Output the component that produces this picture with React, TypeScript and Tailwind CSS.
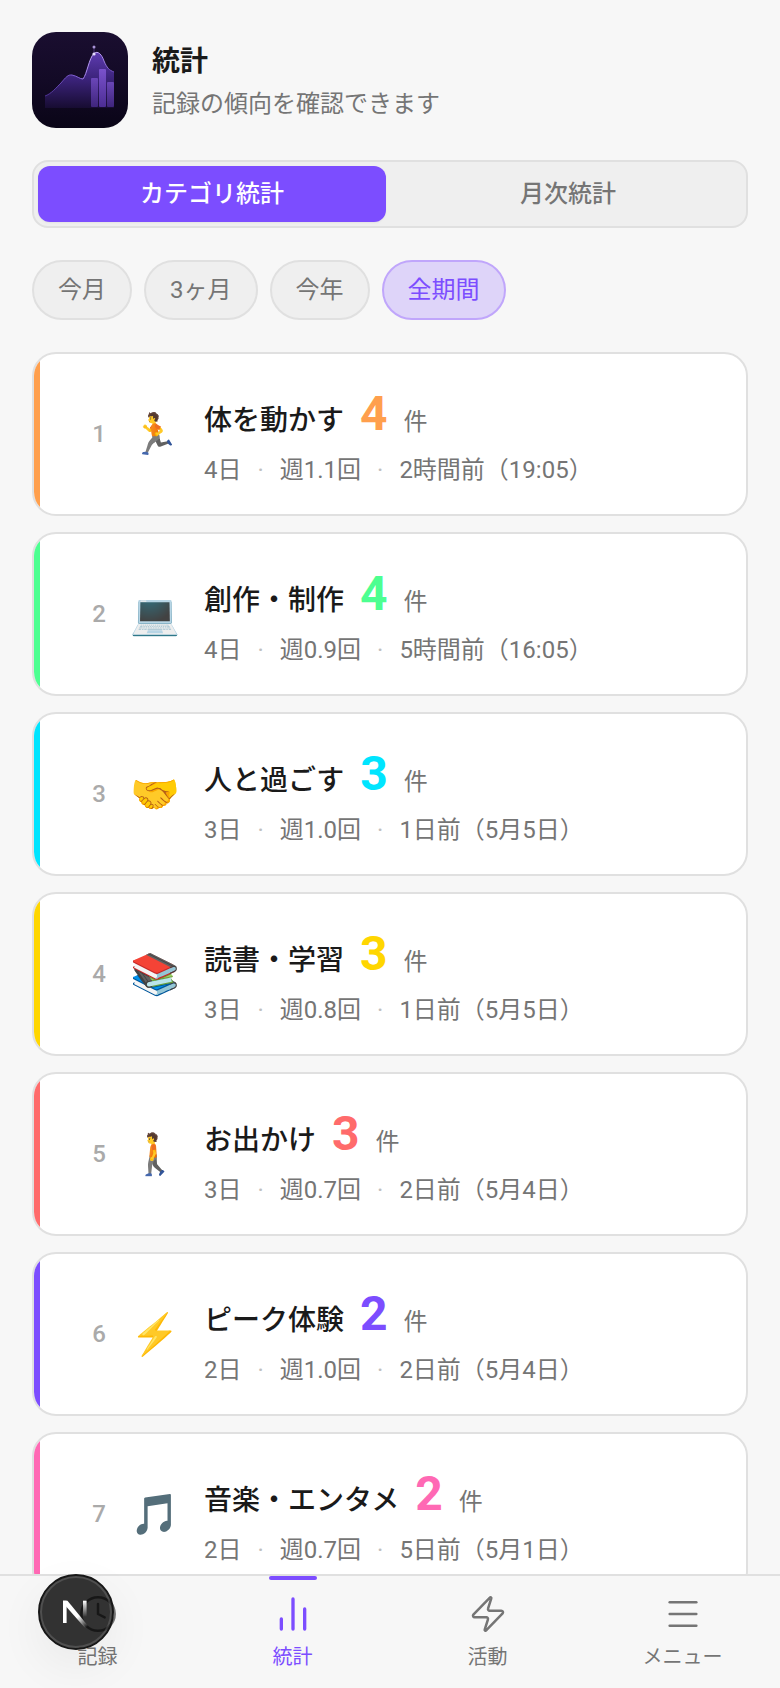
import { ChartNoAxesColumn, Clock, Menu, Zap } from "lucide-react";

type Category = {
  name: string;
  emoji: string;
  count: number;
  days: string;
  rate: string;
  last: string;
  bar: string;
  text: string;
};

const categories: Category[] = [
  { name: "体を動かす", emoji: "🏃", count: 4, days: "4日", rate: "週1.1回", last: "2時間前（19:05）", bar: "bg-[#ff9f4d]", text: "text-[#ff9f4d]" },
  { name: "創作・制作", emoji: "💻", count: 4, days: "4日", rate: "週0.9回", last: "5時間前（16:05）", bar: "bg-[#4dff91]", text: "text-[#4dff91]" },
  { name: "人と過ごす", emoji: "🤝", count: 3, days: "3日", rate: "週1.0回", last: "1日前（5月5日）", bar: "bg-[#00e5ff]", text: "text-[#00e5ff]" },
  { name: "読書・学習", emoji: "📚", count: 3, days: "3日", rate: "週0.8回", last: "1日前（5月5日）", bar: "bg-[#ffd600]", text: "text-[#ffd600]" },
  { name: "お出かけ", emoji: "🚶", count: 3, days: "3日", rate: "週0.7回", last: "2日前（5月4日）", bar: "bg-[#ff6b6b]", text: "text-[#ff6b6b]" },
  { name: "ピーク体験", emoji: "⚡", count: 2, days: "2日", rate: "週1.0回", last: "2日前（5月4日）", bar: "bg-[#7c4dff]", text: "text-[#7c4dff]" },
  { name: "音楽・エンタメ", emoji: "🎵", count: 2, days: "2日", rate: "週0.7回", last: "5日前（5月1日）", bar: "bg-[#ff69b4]", text: "text-[#ff69b4]" },
];

const periods = ["今月", "3ヶ月", "今年", "全期間"];

function StatsLogo() {
  return (
    <svg viewBox="0 0 96 96" className="size-24 shrink-0 rounded-3xl" aria-hidden="true">
      <defs>
        <linearGradient id="logoBg" x1="0" y1="0" x2="0" y2="1">
          <stop offset="0" stopColor="#1a0e30" />
          <stop offset="0.5" stopColor="#130a26" />
          <stop offset="1" stopColor="#0a0517" />
        </linearGradient>
        <linearGradient id="logoArea" x1="0" y1="0" x2="0" y2="1">
          <stop offset="0" stopColor="#5d3bb0" />
          <stop offset="0.5" stopColor="#3a2278" />
          <stop offset="1" stopColor="#170c32" />
        </linearGradient>
        <linearGradient id="logoBar" x1="0" y1="0" x2="0" y2="1">
          <stop offset="0" stopColor="#7a52cc" />
          <stop offset="1" stopColor="#4c2d94" />
        </linearGradient>
        <linearGradient id="logoLine" x1="0" y1="0" x2="1" y2="0">
          <stop offset="0" stopColor="#4a2f90" />
          <stop offset="0.5" stopColor="#8c68e0" />
          <stop offset="0.72" stopColor="#d0b8ff" />
          <stop offset="1" stopColor="#6d48c0" />
        </linearGradient>
      </defs>
      <rect width="96" height="96" fill="url(#logoBg)" />
      <path d="M13 64C19 62 24 56 29 51C34 45 36 42.500 40 43C45 44 48 47 51 47C55 42 57 26 62 21.500C66 18 70 23 72 29C75 36 77 38 82 40V76H13Z" fill="url(#logoArea)" />
      <path d="M13 64C19 62 24 56 29 51C34 45 36 42.500 40 43C45 44 48 47 51 47C55 42 57 26 62 21.500C66 18 70 23 72 29C75 36 77 38 82 40" fill="none" stroke="url(#logoLine)" strokeWidth="1" />
      <rect x="59" y="46" width="7" height="29" rx="1" fill="url(#logoBar)" opacity="0.75" />
      <rect x="67" y="37" width="7" height="38" rx="1" fill="url(#logoBar)" />
      <rect x="75" y="50" width="7" height="25" rx="1" fill="url(#logoBar)" opacity="0.75" />
      <path d="M62 15V22" stroke="#8c68e0" strokeWidth="0.6" strokeOpacity="0.7" />
      <circle cx="62" cy="15" r="1.5" fill="#a893d6" />
      <circle cx="62" cy="22" r="1.6" fill="#e6dcff" />
    </svg>
  );
}

function NextBadge() {
  return (
    <button type="button" aria-label="開発ツール" className="fixed bottom-[38px] left-[38px] size-[76px] rounded-full shadow-[0_16px_48px_rgba(0,0,0,0.06)]">
      <svg viewBox="0 0 76 76" className="size-full" aria-hidden="true">
        <defs>
          <linearGradient id="nDiag" x1="38" y1="38" x2="49" y2="53" gradientUnits="userSpaceOnUse">
            <stop offset="0.25" stopColor="#fff" />
            <stop offset="1" stopColor="#fff" stopOpacity="0" />
          </linearGradient>
          <linearGradient id="nStem" x1="0" y1="27" x2="0" y2="43" gradientUnits="userSpaceOnUse">
            <stop offset="0" stopColor="#fff" />
            <stop offset="1" stopColor="#fff" stopOpacity="0" />
          </linearGradient>
        </defs>
        <circle cx="38" cy="38" r="37" fill="#000" fillOpacity="0.8" stroke="#171717" strokeWidth="2" />
        <circle cx="38" cy="38" r="35" fill="none" stroke="#fff" strokeOpacity="0.14" strokeWidth="2" />
        <rect x="25" y="26.700" width="3.600" height="22.300" fill="#fff" />
        <path d="M25 26.700H29.500L50.500 52.500L47.500 54.500L25 29Z" fill="url(#nDiag)" />
        <rect x="45" y="26.700" width="3.600" height="16" fill="url(#nStem)" />
      </svg>
    </button>
  );
}

const navItems = [
  { label: "記録", Icon: Clock },
  { label: "統計", Icon: ChartNoAxesColumn, active: true },
  { label: "活動", Icon: Zap },
  { label: "メニュー", Icon: Menu },
];

export default function App() {
  return (
    <div lang="ja" className="h-screen overflow-y-auto bg-[#f7f7f7] font-[Roboto,'Noto_Sans_CJK_JP',sans-serif] text-2xl text-[#757575] [scrollbar-width:none]">
      <main className="flex flex-col gap-8 p-8 pb-36">
        <header className="flex items-center gap-6">
          <StatsLogo />
          <div className="flex flex-col gap-[2px] pt-[6px]">
            <h1 className="text-[28px] leading-10 font-bold text-[#1a1a1a]">統計</h1>
            <p className="leading-10">記録の傾向を確認できます</p>
          </div>
        </header>

        <div role="tablist" className="flex gap-2 rounded-2xl border-2 border-[#e0e0e0] bg-[#efefef] p-1 font-medium">
          <button type="button" role="tab" aria-selected="true" className="h-14 flex-1 rounded-xl bg-[#7c4dff] text-white shadow-xs">
            カテゴリ統計
          </button>
          <button type="button" role="tab" aria-selected="false" className="h-14 flex-1 rounded-xl">
            月次統計
          </button>
        </div>

        <div className="flex gap-3">
          {periods.map((p) => (
            <button
              key={p}
              type="button"
              className={
                p === "全期間"
                  ? "h-15 rounded-full border-2 border-[#c0a6fb] bg-[#ded4f9] px-6 text-[#7c4dff]"
                  : "h-15 rounded-full border-2 border-[#e0e0e0] bg-[#efefef] px-6"
              }
            >
              {p}
            </button>
          ))}
        </div>

        <ol className="flex flex-col gap-4">
          {categories.map((c, i) => (
            <li key={c.name} className="flex min-h-41 items-stretch overflow-hidden rounded-3xl border-2 border-[#e0e0e0] bg-white">
              <span className={`w-[6px] shrink-0 ${c.bar}`} />
              <div className="flex items-center pl-8">
                <span className="w-[54px] text-center font-medium text-[#aaaaaa]">{i + 1}</span>
                <span className="w-[58px] pt-[2px] text-center text-[40px] leading-none whitespace-nowrap">{c.emoji}</span>
                <div className="flex flex-col pt-2 pl-5">
                  <div className="flex items-baseline gap-4">
                    <h2 className="text-[28px] leading-14 font-medium text-[#1a1a1a]">{c.name}</h2>
                    <span className={`text-5xl leading-14 font-bold ${c.text}`}>{c.count}</span>
                    <span className="leading-14">件</span>
                  </div>
                  <div className="flex gap-4 leading-10">
                    <span>{c.days}</span>
                    <span className="text-[#c0c0c0]">·</span>
                    <span>{c.rate}</span>
                    <span className="text-[#c0c0c0]">·</span>
                    <span>{c.last}</span>
                  </div>
                </div>
              </div>
            </li>
          ))}
        </ol>
      </main>

      <nav className="fixed inset-x-0 bottom-0 flex h-[114px] border-t-2 border-[#e0e0e0] bg-[#f7f7f7] text-xl">
        {navItems.map(({ label, Icon, active }) => (
          <a
            key={label}
            href="#"
            aria-current={active ? "page" : undefined}
            className={`flex flex-1 flex-col items-center ${active ? "text-[#7c4dff]" : ""}`}
          >
            <span className={`h-1 w-12 rounded-full ${active ? "bg-[#7c4dff]" : ""}`} />
            <Icon className="mt-[14px] size-10" strokeWidth={active ? 2 : 1.5} />
            <span className="mt-1 leading-[38px]">{label}</span>
          </a>
        ))}
      </nav>
      <NextBadge />
    </div>
  );
}
